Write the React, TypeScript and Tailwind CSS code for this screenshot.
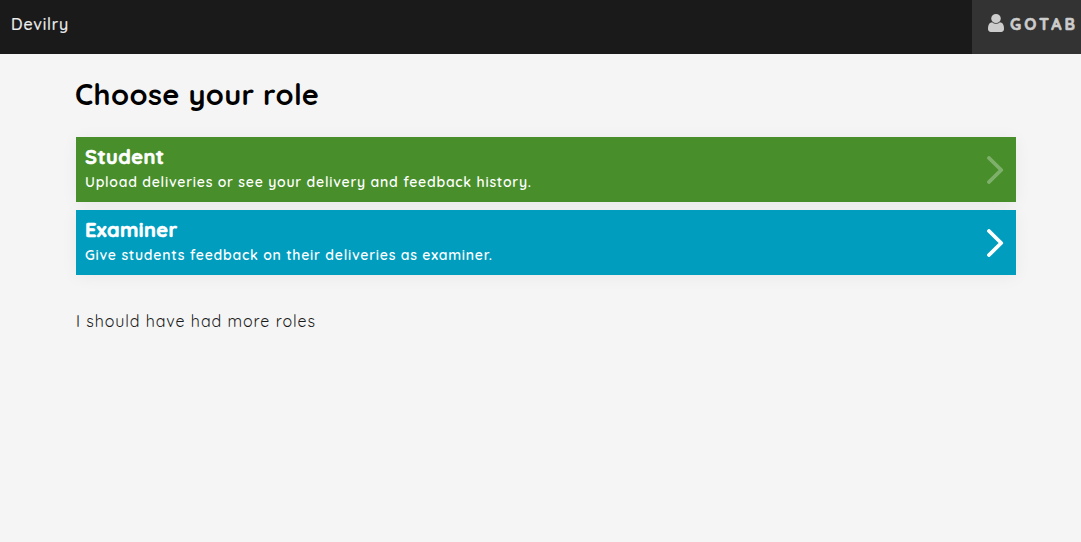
type Role = {
  title: string;
  description: string;
  box: string;
  titleSpacing: string;
  chevron: string;
};

const roles: Role[] = [
  {
    title: "Student",
    description: "Upload deliveries or see your delivery and feedback history.",
    box: "bg-[#488f2b]",
    titleSpacing: "tracking-[0.45px]",
    chevron: "text-white/30",
  },
  {
    title: "Examiner",
    description: "Give students feedback on their deliveries as examiner.",
    box: "bg-[#009dbf]",
    titleSpacing: "tracking-[0.4px]",
    chevron: "text-white",
  },
];

function UserIcon() {
  return (
    <svg viewBox="0 128 1280 1536" preserveAspectRatio="none" className="h-[18px] w-4" fill="currentColor" aria-hidden="true">
      <path d="M1280 1399q0 109-62.5 187t-150.5 78h-854q-88 0-150.5-78t-62.5-187q0-85 8.5-160.5t31.5-152 58.5-131 94-89 134.5-34.5q131 128 313 128t313-128q76 0 134.5 34.5t94 89 58.5 131 31.5 152 8.5 160.5zm-256-887q0 159-112.5 271.5t-271.5 112.5-271.5-112.5-112.5-271.5 112.5-271.5 271.5-112.5 271.5 112.5 112.5 271.5z" />
    </svg>
  );
}

function Chevron({ className }: { className: string }) {
  return (
    <svg viewBox="0 0 17 28" className={`h-7 w-[17px] ${className}`} fill="none" stroke="currentColor" strokeWidth="3.8" aria-hidden="true">
      <path d="M2 2L14.2 14L2 26" strokeLinejoin="round" strokeLinecap="round" />
    </svg>
  );
}

function RoleBox({ role }: { role: Role }) {
  return (
    <a className={`flex h-[65px] items-start justify-between pr-3 pl-[9px] text-white shadow-[0_2px_16px_rgba(0,0,0,0.05)] ${role.box}`}>
      <div className="pt-[7px] whitespace-nowrap">
        <h2 className={`text-[20px] leading-[26px] font-bold [-webkit-text-stroke:0.6px_currentColor] ${role.titleSpacing}`}>{role.title}</h2>
        <p className="text-[14px] leading-6 font-semibold tracking-[0.75px]">{role.description}</p>
      </div>
      <Chevron className={`mt-[19px] ${role.chevron}`} />
    </a>
  );
}

export default function App() {
  return (
    <div className="h-[542px] overflow-hidden bg-[#f5f5f5] font-['Quicksand','Lato',sans-serif] text-black">
      <header className="flex h-[54px] justify-between bg-[#1a1a1a]">
        <a className="pt-3 pl-[11px] text-[16px] leading-6 font-medium tracking-[0.8px] text-[#eeeeee] [-webkit-text-stroke:0.2px_currentColor]">Devilry</a>
        <button className="flex w-[109px] items-start bg-[#333333] pt-[14px] pl-4 text-[#cccccc]">
          <UserIcon />
          <span className="ml-[6px] text-[16px] leading-5 font-bold tracking-[3px] [-webkit-text-stroke:0.6px_currentColor]">GOTAB</span>
        </button>
      </header>
      <main className="mr-[65px] ml-[76px] pt-[22px]">
        <h1 className="-ml-px text-[29px] leading-9 font-bold tracking-[0.4px] whitespace-nowrap">Choose your role</h1>
        <div className="mt-[25px] flex flex-col gap-2">
          {roles.map((role) => (
            <RoleBox key={role.title} role={role} />
          ))}
        </div>
        <p className="mt-[34px] text-[16px] leading-6 tracking-[0.94px] whitespace-nowrap text-[#1a1a1a]">I should have had more roles</p>
      </main>
    </div>
  );
}
